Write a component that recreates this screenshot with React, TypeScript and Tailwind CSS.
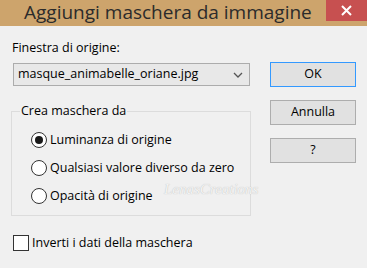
import React from "react";

const font = { fontFamily: '"Open Sans", "Noto Sans", sans-serif' };

function Radio({ checked, label }: { checked?: boolean; label: string }) {
  return (
    <div className="flex items-center h-[16px]">
      <span className="w-[16px] h-[16px] rounded-full border border-[#333] bg-white flex items-center justify-center shrink-0">
        {checked && <span className="w-[8px] h-[8px] rounded-full bg-[#1a1a1a]" />}
      </span>
      <span className="ml-[3px] text-[12.5px] text-[#000] leading-none">{label}</span>
    </div>
  );
}

function Btn({ children, primary }: { children: React.ReactNode; primary?: boolean }) {
  return (
    <button
      className={
        "w-[86px] h-[25px] text-[12.5px] text-black flex items-center justify-center bg-[#e1e1e1] border " +
        (primary ? "border-[#3399ff]" : "border-[#adadad]")
      }
    >
      {children}
    </button>
  );
}

export default function App() {
  return (
    <div className="w-[367px] h-[268px] bg-[#f0f0f0] overflow-hidden" style={font}>
      {/* title bar */}
      <div className="h-[26px] bg-[#cda46c] flex items-start">
        <div className="pl-[24px] text-[19px] leading-[25px] text-[#2b2b2b] flex-1">Aggiungi maschera da immagine</div>
        <div className="w-[41px] h-[21px] bg-[#c75050] flex items-center justify-center">
          <svg width="11" height="11" viewBox="0 0 11 11">
            <path d="M1 1 L10 10 M10 1 L1 10" stroke="#fff" strokeWidth="2" />
          </svg>
        </div>
      </div>

      <div className="flex">
        <div className="w-[257px] pl-[11px]">
          <div className="pt-[14px] pl-[1px] text-[12.5px] leading-[16px] text-black">Finestra di origine:</div>
          <div className="mt-[7px] ml-[2px] w-[237px] h-[23px] border border-[#acacac] bg-[#e8e8e8] flex items-center pl-[4px] pr-[6px]">
            <span className="flex-1 text-[12.5px] text-black">masque_animabelle_oriane.jpg</span>
            <svg width="10" height="6" viewBox="0 0 10 6">
              <path d="M1 1 L5 5 L9 1" stroke="#555" strokeWidth="1.3" fill="none" />
            </svg>
          </div>

          <div className="relative mt-[25px] w-[240px] h-[105px] border border-[#dcdcdc]">
            <span className="absolute left-[8px] top-[-9px] px-[1px] bg-[#f0f0f0] text-[12.5px] leading-[16px] text-black">
              Crea maschera da
            </span>
            <div className="pt-[20px] pl-[19px] flex flex-col gap-[12px]">
              <Radio checked label="Luminanza di origine" />
              <Radio label="Qualsiasi valore diverso da zero" />
              <Radio label="Opacità di origine" />
            </div>
            <span
              className="absolute left-[152px] top-[70px] text-[15px] leading-none italic text-[#f4f4f4] pointer-events-none"
              style={{ fontFamily: '"Liberation Serif", serif', textShadow: "0 0 1px #b0b0b0" }}
            >
              LenasCreations
            </span>
          </div>

          <div className="mt-[18px] ml-[2px] flex items-center">
            <span className="w-[16px] h-[16px] border border-[#333] bg-white" />
            <span className="ml-[3px] text-[12.5px] text-black">Inverti i dati della maschera</span>
          </div>
        </div>

        <div className="pl-[13px] pt-[36px] flex flex-col gap-[13px]">
          <Btn primary>OK</Btn>
          <Btn>Annulla</Btn>
          <Btn>?</Btn>
        </div>
      </div>
    </div>
  );
}
